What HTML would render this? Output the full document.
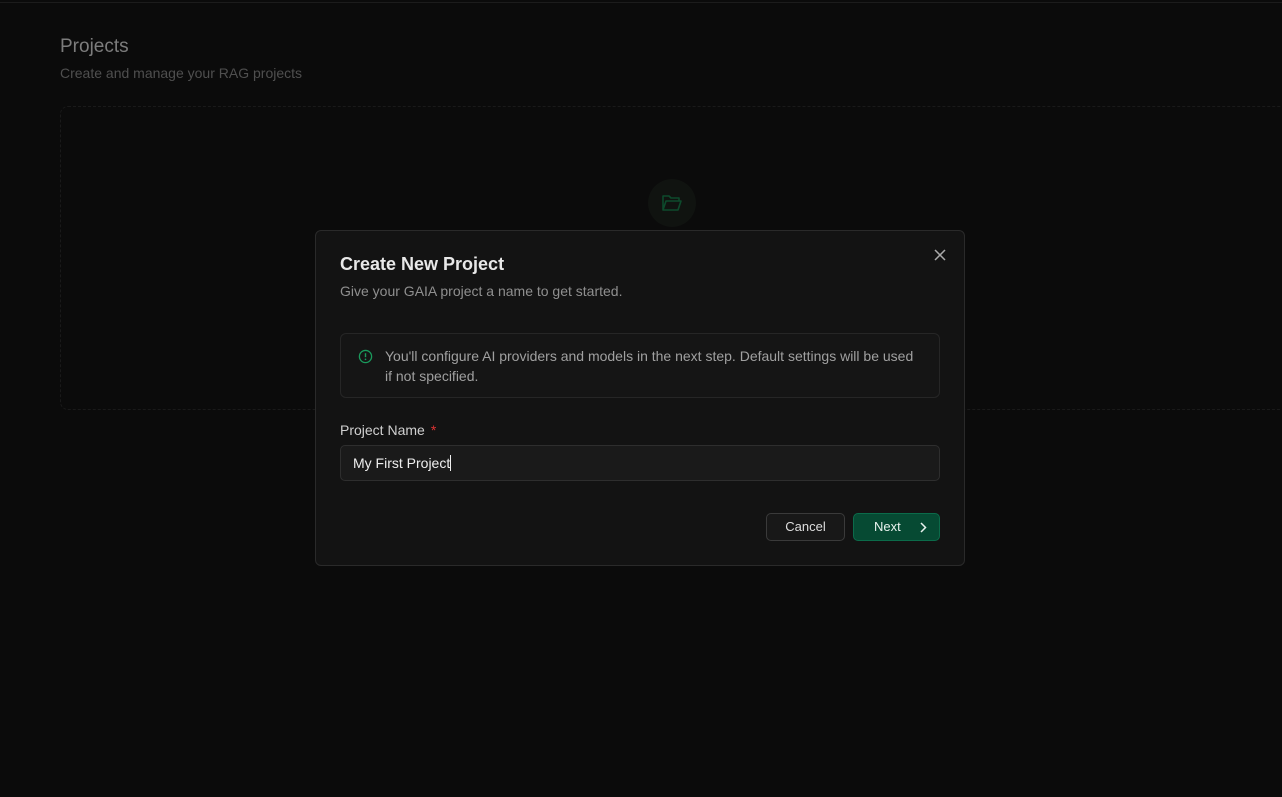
<!DOCTYPE html>
<html><head><meta charset="utf-8"><style>
*{box-sizing:border-box;margin:0;padding:0}
html,body{width:1282px;height:797px;overflow:hidden;background:#0b0b0b;font-family:"Liberation Sans",sans-serif}
.topline{position:absolute;left:0;top:2px;width:1282px;height:1px;background:#1c1c1c}
.title{position:absolute;left:60px;top:36px;font-size:19px;color:#7c7c7c}
.sub{position:absolute;left:60px;top:65px;font-size:14px;color:#4f4f4f}
.dash{position:absolute;left:60px;top:106px;width:1240px;height:304px;border:1px dashed #1a1a1a;border-radius:8px}
.fold{position:absolute;left:648px;top:179px;width:48px;height:48px;border-radius:50%;background:#101310}
.modal{position:absolute;left:315px;top:230px;width:650px;height:336px;background:#131313;border:1px solid #2a2a2a;border-radius:6px}
.h{position:absolute;left:24px;top:23px;font-size:18px;font-weight:bold;color:#e8e8e8}
.d{position:absolute;left:24px;top:52px;font-size:14px;color:#8f8f8f}
.x{position:absolute;left:617px;top:17px}
.info{position:absolute;left:24px;top:102px;width:600px;height:65px;border:1px solid #262626;border-radius:6px;background:#151515}
.info svg{position:absolute;left:17px;top:15px}
.info p{position:absolute;left:44px;top:12px;width:532px;font-size:14px;line-height:20px;color:#a0a0a0}
.lab{position:absolute;left:24px;top:191px;font-size:14px;color:#d0d0d0}
.lab span{color:#d33;margin-left:6px}
.inp{position:absolute;left:24px;top:214px;width:600px;height:36px;border:1px solid #2e2e2e;border-radius:5px;background:#1a1a1a;font-size:14px;color:#eee;padding:9px 12px}
.cur{display:inline-block;width:1px;height:16px;background:#eee;vertical-align:-3px}
.btn{position:absolute;top:282px;height:28px;border-radius:5px;font-size:13px;line-height:26px}
.c{left:450px;width:79px;border:1px solid #3a3a3a;background:#181818;color:#ddd;text-align:center}
.n{left:537px;width:87px;border:1px solid #0b6b4a;background:#064a33;color:#e8f2ee;padding-left:20px}
.n svg{position:absolute;right:12px;top:8px}
</style></head><body>
<div class="topline"></div>
<div class="title">Projects</div>
<div class="sub">Create and manage your RAG projects</div>
<div class="dash"></div>
<div class="fold"><svg width="48" height="48" viewBox="0 0 48 48"><path d="M15 31V17h6l2 2h8v3M15 31l3-9h15l-3 9z" fill="none" stroke="#0d4a2c" stroke-width="1.6" stroke-linejoin="round"/></svg></div>
<div class="modal">
<div class="h">Create New Project</div>
<div class="d">Give your GAIA project a name to get started.</div>
<svg class="x" width="14" height="14" viewBox="0 0 14 14"><path d="M2 2l10 10M12 2L2 12" stroke="#aaa" stroke-width="1.5"/></svg>
<div class="info"><svg width="15" height="15" viewBox="0 0 16 16"><circle cx="8" cy="8" r="6.5" fill="none" stroke="#1a9a5c" stroke-width="1.4"/><path d="M8 4.5v4.2" stroke="#1a9a5c" stroke-width="1.5"/><circle cx="8" cy="11" r=".9" fill="#1a9a5c"/></svg><p>You'll configure AI providers and models in the next step. Default settings will be used if not specified.</p></div>
<div class="lab">Project Name<span>*</span></div>
<div class="inp">My First Project<span class="cur"></span></div>
<div class="btn c">Cancel</div>
<div class="btn n">Next<svg width="8" height="11" viewBox="0 0 8 11"><path d="M2 1l4.5 4.5L2 10" fill="none" stroke="#e8f2ee" stroke-width="1.5"/></svg></div>
</div>
</body></html>
